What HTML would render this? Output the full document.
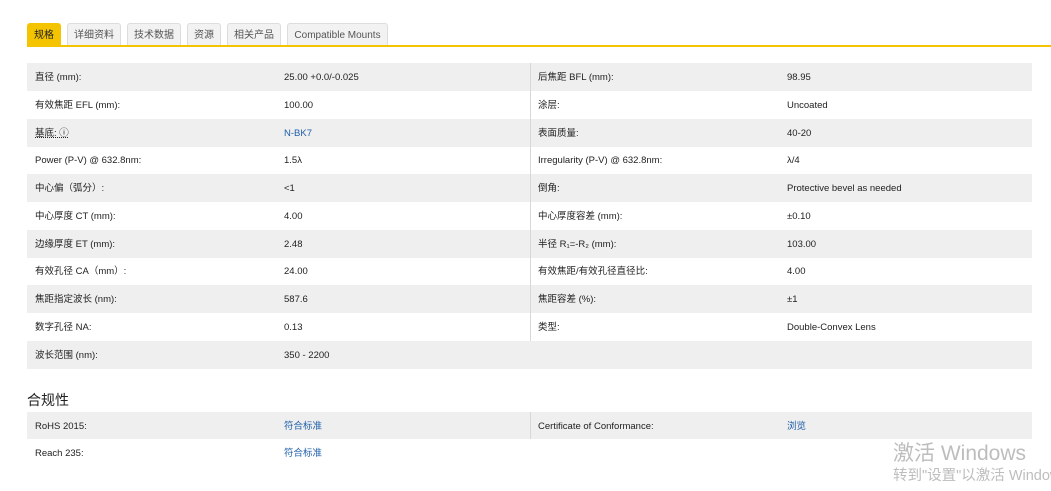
<!DOCTYPE html>
<html><head><meta charset="utf-8"><style>
*{margin:0;padding:0;box-sizing:border-box}
body{width:1051px;height:491px;background:#fff;font-family:"Liberation Sans","Noto Sans CJK SC",sans-serif;font-size:9.5px;color:#222;position:relative;overflow:hidden}
.tab{position:absolute;top:23px;height:23px;border:1px solid #ddd;border-bottom:none;background:#f2f2f2;color:#555;font-size:10px;line-height:23px;text-align:center;border-radius:3px 3px 0 0}
.tab.on{background:#f5c400;border-color:#f5c400;color:#222}
.line{position:absolute;top:45px;left:27px;right:0;height:2px;background:#f5c400}
.row{position:absolute;left:27px;width:1005px;height:28px}
.g{background:#efefef}
.row span{position:absolute;top:1px;line-height:28px;white-space:nowrap}
.a{left:8px}.b{left:257px}.c{left:511px}.d{left:760px}
.div{position:absolute;left:503px;top:0;bottom:0;width:1px;background:#d8d8d8}
.lk{color:#1f5fa8}
h3{position:absolute;left:27px;top:390px;font-size:14px;font-weight:normal;color:#222}
.wm{position:absolute;left:893px;color:#bdbdbd;white-space:nowrap}
</style></head><body>
<div class="tab on" style="left:27px;width:34px">规格</div>
<div class="tab" style="left:67px;width:54px">详细资料</div>
<div class="tab" style="left:127px;width:54px">技术数据</div>
<div class="tab" style="left:187px;width:34px">资源</div>
<div class="tab" style="left:227px;width:54px">相关产品</div>
<div class="tab" style="left:287px;width:101px">Compatible Mounts</div>
<div class="line"></div>

<div class="row g" style="top:63px"><span class="a">直径 (mm):</span><span class="b">25.00 +0.0/-0.025</span><div class="div"></div><span class="c">后焦距 BFL (mm):</span><span class="d">98.95</span></div>
<div class="row" style="top:90.75px"><span class="a">有效焦距 EFL (mm):</span><span class="b">100.00</span><div class="div"></div><span class="c">涂层:</span><span class="d">Uncoated</span></div>
<div class="row g" style="top:118.5px"><span class="a" style="text-decoration:underline dotted">基底: ⓘ</span><span class="b lk">N-BK7</span><div class="div"></div><span class="c">表面质量:</span><span class="d">40-20</span></div>
<div class="row" style="top:146.25px"><span class="a">Power (P-V) @ 632.8nm:</span><span class="b">1.5λ</span><div class="div"></div><span class="c">Irregularity (P-V) @ 632.8nm:</span><span class="d">λ/4</span></div>
<div class="row g" style="top:174px"><span class="a">中心偏（弧分）:</span><span class="b">&lt;1</span><div class="div"></div><span class="c">倒角:</span><span class="d">Protective bevel as needed</span></div>
<div class="row" style="top:201.75px"><span class="a">中心厚度 CT (mm):</span><span class="b">4.00</span><div class="div"></div><span class="c">中心厚度容差 (mm):</span><span class="d">±0.10</span></div>
<div class="row g" style="top:229.5px"><span class="a">边缘厚度 ET (mm):</span><span class="b">2.48</span><div class="div"></div><span class="c">半径 R₁=-R₂ (mm):</span><span class="d">103.00</span></div>
<div class="row" style="top:257.25px"><span class="a">有效孔径 CA（mm）:</span><span class="b">24.00</span><div class="div"></div><span class="c">有效焦距/有效孔径直径比:</span><span class="d">4.00</span></div>
<div class="row g" style="top:285px"><span class="a">焦距指定波长 (nm):</span><span class="b">587.6</span><div class="div"></div><span class="c">焦距容差 (%):</span><span class="d">±1</span></div>
<div class="row" style="top:312.75px"><span class="a">数字孔径 NA:</span><span class="b">0.13</span><div class="div"></div><span class="c">类型:</span><span class="d">Double-Convex Lens</span></div>
<div class="row g" style="top:340.5px"><span class="a">波长范围 (nm):</span><span class="b">350 - 2200</span></div>

<h3>合规性</h3>
<div class="row g" style="top:412px;height:27px"><span class="a" style="line-height:27px">RoHS 2015:</span><span class="b lk" style="line-height:27px">符合标准</span><div class="div"></div><span class="c" style="line-height:27px">Certificate of Conformance:</span><span class="d lk" style="line-height:27px">浏览</span></div>
<div class="row" style="top:439px"><span class="a">Reach 235:</span><span class="b lk">符合标准</span></div>

<div class="wm" style="top:437px;font-size:21px">激活 Windows</div>
<div class="wm" style="top:464px;font-size:14.5px">转到"设置"以激活 Windows。</div>
</body></html>
